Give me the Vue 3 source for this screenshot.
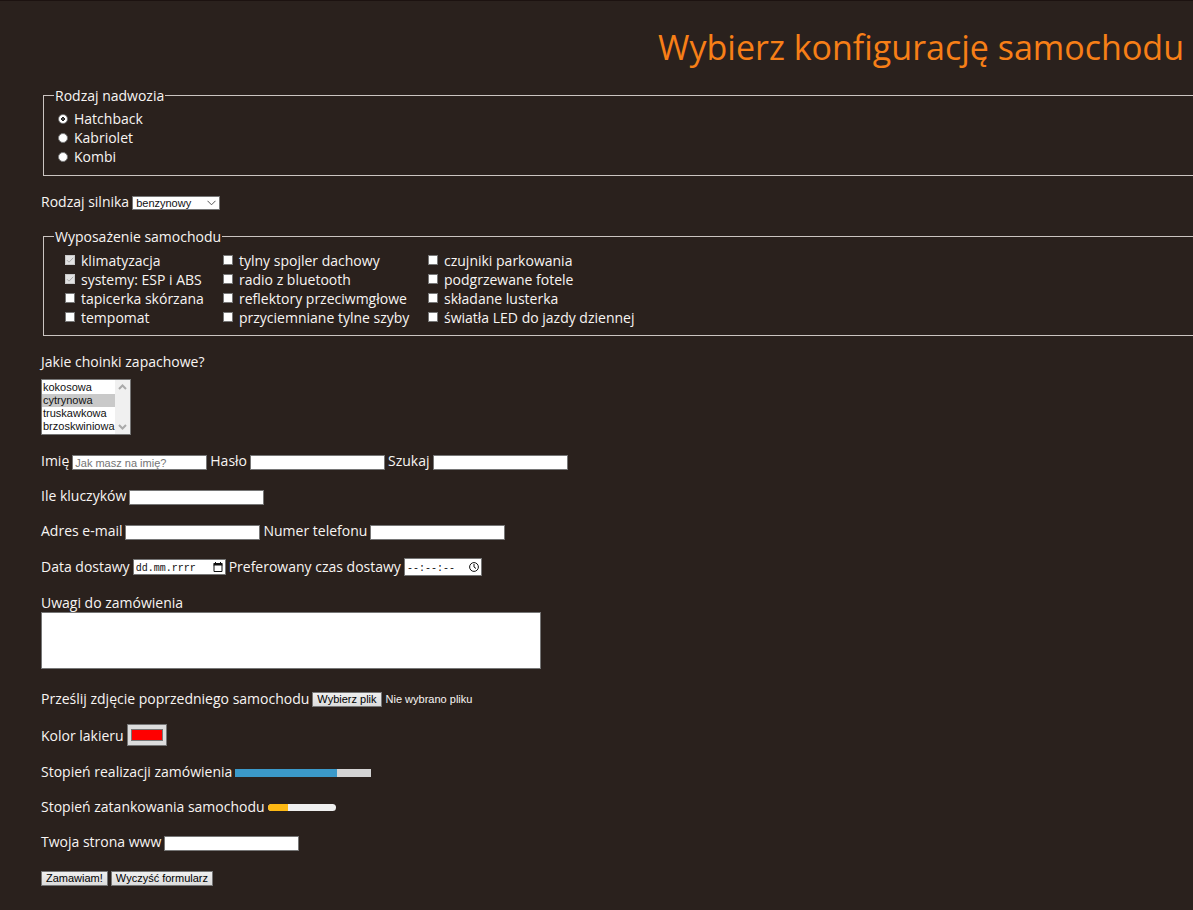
<script setup>
import { ref } from 'vue'

const bodies = ['Hatchback', 'Kabriolet', 'Kombi']
const body = ref('Hatchback')

const equipment = [
  [
    { name: 'klimatyzacja', included: true },
    { name: 'systemy: ESP i ABS', included: true },
    { name: 'tapicerka skórzana' },
    { name: 'tempomat' },
  ],
  [
    { name: 'tylny spojler dachowy' },
    { name: 'radio z bluetooth' },
    { name: 'reflektory przeciwmgłowe' },
    { name: 'przyciemniane tylne szyby' },
  ],
  [
    { name: 'czujniki parkowania' },
    { name: 'podgrzewane fotele' },
    { name: 'składane lusterka' },
    { name: 'światła LED do jazdy dziennej' },
  ],
]

const engine = ref('benzynowy')
const scents = ['kokosowa', 'cytrynowa', 'truskawkowa', 'brzoskwiniowa']
const progress = 75
const fuel = 30
</script>

<template>
  <main class="page">
    <h1>Wybierz konfigurację samochodu</h1>
    <form class="form" @submit.prevent>
      <fieldset>
        <legend>Rodzaj nadwozia</legend>
        <label v-for="b in bodies" :key="b" class="choice">
          <input v-model="body" type="radio" name="body" :value="b" />
          {{ b }}
        </label>
      </fieldset>

      <div class="row">
        <label for="engine">Rodzaj silnika</label>
        <span class="select">
          <select id="engine" v-model="engine">
            <option>benzynowy</option>
          </select>
          <svg class="chevron" viewBox="0 0 9 6"><path d="M.5 .8 4.5 4.8 8.5 .8" /></svg>
        </span>
      </div>

      <fieldset class="equipment">
        <legend>Wyposażenie samochodu</legend>
        <div class="columns">
          <div v-for="(column, i) in equipment" :key="i">
            <label v-for="item in column" :key="item.name" class="choice">
              <span class="tick">
                <input type="checkbox" :checked="item.included" :disabled="item.included" />
                <svg v-if="item.included" viewBox="0 0 10 10"><path d="M2 5.2 4 7.2 8.2 2.8" /></svg>
              </span>
              {{ item.name }}
            </label>
          </div>
        </div>
      </fieldset>

      <div class="stack scents">
        <label for="scent">Jakie choinki zapachowe?</label>
        <div class="listbox">
          <select id="scent" multiple size="4">
            <option v-for="s in scents" :key="s" :class="{ chosen: s === 'cytrynowa' }">{{ s }}</option>
          </select>
          <span class="scroll">
            <svg viewBox="0 0 9 6"><path d="M1 5 4.5 1.5 8 5" /></svg>
            <svg viewBox="0 0 9 6"><path d="M1 1 4.5 4.5 8 1" /></svg>
          </span>
        </div>
      </div>

      <div class="row">
        <label for="name">Imię</label>
        <input id="name" class="text" type="text" placeholder="Jak masz na imię?" />
        <label for="password">Hasło</label>
        <input id="password" class="text" type="password" />
        <label for="search">Szukaj</label>
        <input id="search" class="text" type="search" />
      </div>

      <div class="row">
        <label for="keys">Ile kluczyków</label>
        <input id="keys" class="text" type="number" />
      </div>

      <div class="row">
        <label for="email">Adres e-mail</label>
        <input id="email" class="text" type="email" />
        <label for="phone">Numer telefonu</label>
        <input id="phone" class="text" type="tel" />
      </div>

      <div class="row delivery">
        <label for="date">Data dostawy</label>
        <span class="picker">
          <input id="date" class="date" type="text" value="dd.mm.rrrr" />
          <svg viewBox="0 0 10 10"><path d="M1 2.5h8v7H1z" /><path class="solid" d="M.5 1h9v2.5h-9zM2 0h1v1H2zM7 0h1v1H7z" /></svg>
        </span>
        <label for="time">Preferowany czas dostawy</label>
        <span class="picker">
          <input id="time" class="time" type="text" value="--:--:--" />
          <svg viewBox="0 0 10 10"><circle cx="5" cy="5" r="4.4" /><path d="M5 2v3l2 1.5" /></svg>
        </span>
      </div>

      <div class="stack notes">
        <label for="notes">Uwagi do zamówienia</label>
        <textarea id="notes"></textarea>
      </div>

      <div class="row">
        <span>Prześlij zdjęcie poprzedniego samochodu</span>
        <span class="file">
          <input id="photo" type="file" />
          <label for="photo" class="button">Wybierz plik</label>
          <span>Nie wybrano pliku</span>
        </span>
      </div>

      <div class="row">
        <label for="color">Kolor lakieru</label>
        <input id="color" type="color" value="#ff0000" />
      </div>

      <div class="row">
        <span id="progress-label">Stopień realizacji zamówienia</span>
        <div class="progress" role="progressbar" aria-labelledby="progress-label" :aria-valuenow="progress">
          <div :style="{ width: progress + '%' }"></div>
        </div>
      </div>

      <div class="row">
        <span id="fuel-label">Stopień zatankowania samochodu</span>
        <div class="meter" role="meter" aria-labelledby="fuel-label" :aria-valuenow="fuel">
          <div :style="{ width: fuel + '%' }"></div>
        </div>
      </div>

      <div class="row">
        <label for="www">Twoja strona www</label>
        <input id="www" class="text" type="url" />
      </div>

      <div class="row actions">
        <button type="submit" class="button">Zamawiam!</button>
        <button type="reset" class="button">Wyczyść formularz</button>
      </div>
    </form>
  </main>
</template>

<style>
body {
  background: #2a211d;
}
</style>

<style scoped>
* {
  box-sizing: border-box;
}

.page {
  border-top: 1px solid #1c1210;
  color: #f8f5f3;
  font: 14px/19px "Open Sans", sans-serif;
  overflow: hidden;
}

h1 {
  margin: 21px 9px 14px;
  color: #f77f17;
  font-size: 34px;
  font-weight: 400;
  line-height: 50px;
  text-align: right;
}

.form {
  display: flex;
  flex-direction: column;
  gap: 16px;
  margin-left: 41px;
}

fieldset {
  margin: 0 0 0 2px;
  padding: 4px 0 9px 10px;
  border: 1px solid #cbc4c1;
  border-right: 0;
}

.equipment {
  padding: 5px 0 8px 10px;
}

legend {
  padding: 0 1px;
}

.choice {
  display: flex;
  align-items: center;
  gap: 6px;
  padding-left: 4px;
}

.columns {
  display: grid;
  grid-template-columns: 158px 205px auto;
  padding-left: 7px;
  white-space: nowrap;
}

.row {
  display: flex;
  align-items: center;
  gap: 3px;
  min-height: 19px;
  white-space: nowrap;
}

.stack {
  display: flex;
  flex-direction: column;
  align-items: flex-start;
}

input,
select,
textarea,
.button,
.file {
  margin: 0;
  font: 11px/13px "Liberation Sans", Arial, sans-serif;
}

input[type="radio"],
input[type="checkbox"] {
  appearance: none;
  display: block;
  width: 10px;
  height: 10px;
  border: 1px solid #777;
  background: #fff;
}

input[type="radio"] {
  border-radius: 50%;
}

input[type="radio"]:checked {
  background: radial-gradient(circle, #999 0, #222 1px, #222 2px, #fff 2px);
}

input[type="checkbox"]:disabled {
  border-color: #c8c8c8;
  background: #e2e2e2;
}

.tick {
  position: relative;
  margin-bottom: 2px;
}

.tick svg {
  position: absolute;
  inset: 0;
  stroke: #aaa;
}

.text,
.date,
.time,
select,
textarea {
  appearance: none;
  padding: 0 2px;
  border: 1px solid #767676;
  border-radius: 0;
  background: #fff;
  color: #111;
}

.text {
  width: 135px;
  height: 15px;
  margin-top: 4px;
}

.text::placeholder {
  color: #757575;
}

.select,
.picker {
  position: relative;
  display: flex;
  margin-top: 2px;
}

.select select {
  width: 88px;
  height: 14px;
  padding-left: 3px;
  line-height: 12px;
}

svg {
  fill: none;
  stroke: #555;
}

.chevron {
  position: absolute;
  top: 4px;
  right: 4px;
  width: 9px;
  height: 6px;
}

.scents {
  gap: 8px;
}

.listbox {
  display: flex;
  width: 90px;
  height: 56px;
  border: 1px solid #767676;
  background: #fff;
}

.listbox select {
  flex: 1;
  min-width: 0;
  padding: 1px 0 0;
  border: 0;
  overflow: hidden;
  scrollbar-width: none;
}

.listbox option {
  min-height: 13px;
  height: 13px;
  padding: 0 0 0 1px;
  line-height: 13px;
}

.listbox .chosen {
  background: #c9c9c9;
}

.scroll {
  display: flex;
  flex-direction: column;
  align-items: center;
  justify-content: space-between;
  width: 15px;
  padding: 4px 0;
  background: #f0f0f0;
}

.scroll svg {
  width: 9px;
  height: 6px;
  stroke: #aaa;
  stroke-width: 2;
}

.date,
.time {
  padding-top: 2px;
  font-family: "Liberation Mono", monospace;
  font-size: 10px;
}

.date {
  width: 93px;
  height: 16px;
}

.time {
  width: 78px;
  height: 18px;
}

.picker svg {
  position: absolute;
  top: 50%;
  right: 3px;
  width: 10px;
  height: 10px;
  margin-top: -5px;
  stroke: #111;
}

.picker .solid {
  fill: #111;
  stroke: none;
}

textarea {
  width: 500px;
  height: 57px;
  resize: none;
}

.notes {
  margin: 1px 0 4px;
}

.file {
  position: relative;
  display: flex;
  align-items: center;
  gap: 4px;
  margin-top: 2px;
}

.file input {
  position: absolute;
  width: 68px;
  opacity: 0;
}

.button {
  height: 15px;
  padding: 0 4px;
  border: 1px solid #767676;
  border-radius: 0;
  background: linear-gradient(#efefef, #dcdcdc);
  color: #000;
}

.actions .button {
  margin-top: 3px;
}

#color {
  width: 40px;
  height: 22px;
  padding: 4px 3px;
  border: 1px solid #767676;
  background: #ddd;
}

#color::-webkit-color-swatch-wrapper {
  padding: 0;
}

#color::-webkit-color-swatch {
  border: 1px solid #777;
  border-radius: 0;
}

.progress {
  width: 136px;
  height: 8px;
  margin-top: 2px;
  background: #d4d4d4;
}

.progress div {
  height: 100%;
  background: #3b99c9;
}

.meter {
  width: 68px;
  height: 7px;
  margin-top: 2px;
  border-radius: 4px;
  background: #efefef;
  overflow: hidden;
}

.meter div {
  height: 100%;
  background: #fdb813;
}
</style>
